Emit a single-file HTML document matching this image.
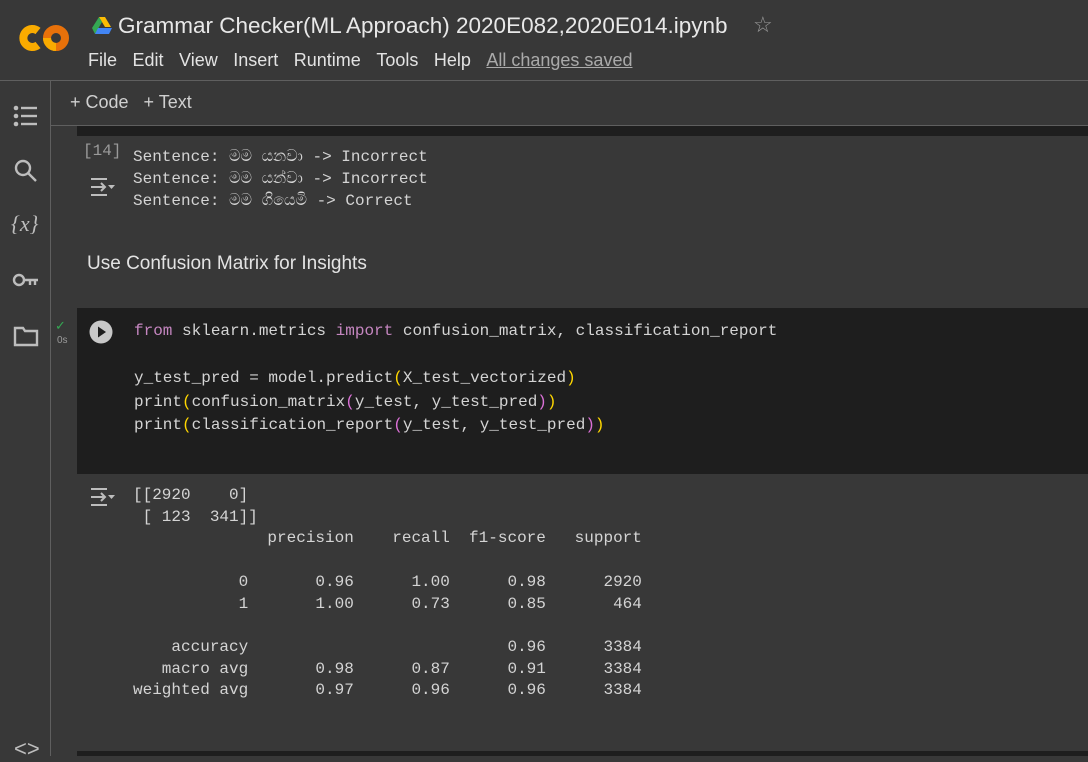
<!DOCTYPE html>
<html><head><meta charset="utf-8">
<style>
*{margin:0;padding:0;box-sizing:border-box}
body{width:1088px;height:756px;overflow:hidden;background:#383838;font-family:"Liberation Sans",sans-serif;color:#e3e3e3;position:relative}
.abs{position:absolute}
.mono{font-family:"Liberation Mono","Noto Sans CJK JP",monospace;font-size:16px;white-space:pre;color:#d4d4d4}
.menu span{margin-right:15.5px}
.kw{color:#c586c0}.y{color:#ffd700}.p{color:#da70d6}
.icon{stroke:#bdbdbd;fill:none;stroke-width:2.4}
</style></head><body>
<!-- header -->
<svg class="abs" style="left:17px;top:22px" width="54" height="32" viewBox="0 0 54 32">
<path d="M21 9 A9 9 0 1 0 21 23" stroke="#f9ab00" stroke-width="8" fill="none"/>
<circle cx="39" cy="16" r="9" stroke="#e8710a" stroke-width="8" fill="none"/>
<path d="M30 16 A9 9 0 0 0 39 25" stroke="#f9ab00" stroke-width="8" fill="none"/>
</svg>
<svg class="abs" style="left:92px;top:16px" width="20" height="18" viewBox="0 0 20 18">
<path d="M7 1h6l6 10h-6z" fill="#fbbc04"/><path d="M7 1l3 5-7 12-3-6z" fill="#34a853"/><path d="M3 18l3-6h14l-3 6z" fill="#4285f4"/>
</svg>
<div class="abs" style="left:118px;top:13px;font-size:22.5px;color:#e8e8e8">Grammar Checker(ML Approach) 2020E082,2020E014.ipynb</div>
<div class="abs" style="left:753px;top:12px;font-size:22px;color:#9a9a9a">☆</div>
<div class="abs menu" style="left:88px;top:50px;font-size:18px;color:#e3e3e3"><span>File</span><span>Edit</span><span>View</span><span>Insert</span><span>Runtime</span><span>Tools</span><span>Help</span><span style="color:#aaa;text-decoration:underline">All changes saved</span></div>
<div class="abs" style="left:0;top:80px;width:1088px;height:1px;background:#5f5f5f"></div>
<div class="abs" style="left:50px;top:80px;width:1px;height:676px;background:#5f5f5f"></div>
<div class="abs" style="left:51px;top:125px;width:1037px;height:1px;background:#5f5f5f"></div>
<div class="abs" style="left:70px;top:92px;font-size:18px;color:#d0d0d0">+ Code&nbsp;&nbsp;&nbsp;+ Text</div>
<div class="abs" style="left:77px;top:126px;width:1011px;height:10px;background:#1e1e1e"></div>
<!-- sidebar icons -->
<svg class="abs" style="left:13px;top:104px" width="26" height="24"><g fill="#bdbdbd"><circle cx="3" cy="4" r="2.3"/><circle cx="3" cy="12" r="2.3"/><circle cx="3" cy="20" r="2.3"/><rect x="8" y="2.8" width="16" height="2.4"/><rect x="8" y="10.8" width="16" height="2.4"/><rect x="8" y="18.8" width="16" height="2.4"/></g></svg>
<svg class="abs" style="left:13px;top:158px" width="26" height="26"><circle cx="10" cy="10" r="7" class="icon"/><path d="M15 15l8 8" class="icon" stroke-width="3"/></svg>
<div class="abs" style="left:11px;top:211px;font-size:22px;color:#bdbdbd;font-family:'Liberation Serif',serif;font-style:italic">{<i>x</i>}</div>
<svg class="abs" style="left:12px;top:272px" width="28" height="18"><circle cx="7" cy="8" r="5" class="icon"/><path d="M12 8h14M18 8v5M23 8v5" class="icon"/></svg>
<svg class="abs" style="left:13px;top:325px" width="26" height="22"><path d="M2 3h8l2 3h12v14H2z" class="icon"/></svg>
<div class="abs" style="left:14px;top:736px;font-size:22px;color:#bdbdbd">&lt;&gt;</div>
<!-- first output -->
<div class="abs mono" style="left:83px;top:142px;color:#9a9a9a;font-size:16px">[14]</div>
<svg class="abs" style="left:89px;top:176px" width="28" height="22"><path d="M2 3h16M2 19h16M2 11h14M12 7l4 4-4 4" stroke="#bdbdbd" stroke-width="2" fill="none"/><path d="M19 9h7l-3.5 4z" fill="#bdbdbd"/></svg>
<div class="abs mono" style="left:133px;top:146px;line-height:22px">Sentence: මම යනවා -&gt; Incorrect
Sentence: මම යන්වා -&gt; Incorrect
Sentence: මම ගියෙමි -&gt; Correct</div>
<div class="abs" style="left:87px;top:253px;font-size:19px;color:#e3e3e3">Use Confusion Matrix for Insights</div>
<!-- code cell -->
<div class="abs" style="left:77px;top:308px;width:1011px;height:166px;background:#1e1e1e"></div>
<div class="abs" style="left:55px;top:318px;color:#34a853;font-size:13px">✓</div>
<div class="abs" style="left:57px;top:335px;color:#9a9a9a;font-size:10px">0s</div>
<svg class="abs" style="left:89px;top:320px" width="24" height="24"><circle cx="12" cy="12" r="11.5" fill="#c8c8c8"/><path d="M9 6.5l8 5.5-8 5.5z" fill="#1e1e1e"/></svg>
<div class="abs mono" style="left:134px;top:320px;line-height:23.5px"><span class="kw">from</span> sklearn.metrics <span class="kw">import</span> confusion_matrix, classification_report

y_test_pred = model.predict<span class="y">(</span>X_test_vectorized<span class="y">)</span>
print<span class="y">(</span>confusion_matrix<span class="p">(</span>y_test, y_test_pred<span class="p">)</span><span class="y">)</span>
print<span class="y">(</span>classification_report<span class="p">(</span>y_test, y_test_pred<span class="p">)</span><span class="y">)</span></div>
<svg class="abs" style="left:89px;top:486px" width="28" height="22"><path d="M2 3h16M2 19h16M2 11h14M12 7l4 4-4 4" stroke="#bdbdbd" stroke-width="2" fill="none"/><path d="M19 9h7l-3.5 4z" fill="#bdbdbd"/></svg>
<div class="abs mono" style="left:133px;top:485px;line-height:21.7px">[[2920    0]
 [ 123  341]]
              precision    recall  f1-score   support

           0       0.96      1.00      0.98      2920
           1       1.00      0.73      0.85       464

    accuracy                           0.96      3384
   macro avg       0.98      0.87      0.91      3384
weighted avg       0.97      0.96      0.96      3384</div>
<div class="abs" style="left:77px;top:751px;width:1011px;height:5px;background:#1e1e1e"></div>
</body></html>
